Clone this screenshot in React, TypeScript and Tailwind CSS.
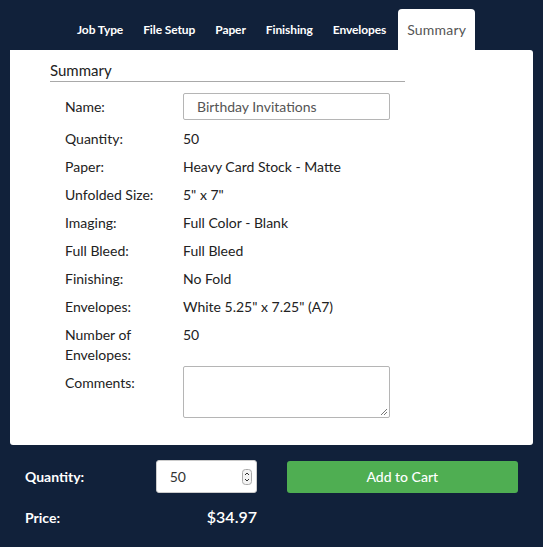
import React from 'react';

const tabs = ['Job Type', 'File Setup', 'Paper', 'Finishing', 'Envelopes', 'Summary'];

const rows: [string, string][] = [
  ['Quantity:', '50'],
  ['Paper:', 'Heavy Card Stock - Matte'],
  ['Unfolded Size:', '5" x 7"'],
  ['Imaging:', 'Full Color - Blank'],
  ['Full Bleed:', 'Full Bleed'],
  ['Finishing:', 'No Fold'],
  ['Envelopes:', 'White 5.25" x 7.25" (A7)'],
];

export default function App() {
  return (
    <div className="w-full h-[547px] bg-[#11213a] font-['Lato','Liberation_Sans',sans-serif] overflow-hidden">
      {/* tabs */}
      <div className="flex pt-[9px] pl-[67px]">
        {tabs.map((t) => {
          const active = t === 'Summary';
          return active ? (
            <div key={t} className="ml-[2px] h-[41px] px-[9px] flex items-center bg-white rounded-t-[4px] text-[14px] text-[#555] tracking-[0.2px]">
              {t}
            </div>
          ) : (
            <div key={t} className="h-[41px] px-[10px] flex items-center text-[12px] font-bold text-white tracking-[-0.1px]">
              {t}
            </div>
          );
        })}
      </div>

      {/* panel */}
      <div className="mx-[10px] h-[395px] bg-white rounded-b-[3px] rounded-tr-[3px] pl-[40px] pt-[10px]">
        <div className="w-[355px] border-b border-[#a9a9a9] text-[15px] leading-[21px] text-[#222]">Summary</div>

        <div className="pl-[15px] mt-[11px] text-[14px] text-[#222]">
          <div className="flex items-center h-[27px]">
            <div className="w-[118px]">Name:</div>
            <div className="w-[207px] h-[27px] border border-[#b5b5b5] rounded-[2px] pl-[13px] flex items-center text-[#555]">
              Birthday Invitations
            </div>
          </div>
          {rows.map(([l, v], i) => (
            <div key={l} className={`flex leading-[20px] ${i === 0 ? 'mt-[9px]' : 'mt-[8px]'}`}>
              <div className="w-[118px]">{l}</div>
              <div>{v}</div>
            </div>
          ))}
          <div className="flex mt-[8px] leading-[20px]">
            <div className="w-[118px]">Number of<br />Envelopes:</div>
            <div>50</div>
          </div>
          <div className="flex mt-[1px]">
            <div className="w-[118px] pt-[7px] leading-[20px]">Comments:</div>
            <div className="relative w-[207px] h-[52px] border border-[#b5b5b5] rounded-[2px]">
              <svg className="absolute right-[1px] bottom-[1px]" width="8" height="8" viewBox="0 0 8 8">
                <path d="M7 1L1 7M7 4L4 7" stroke="#777" strokeWidth="1" />
              </svg>
            </div>
          </div>
        </div>
      </div>

      {/* bottom */}
      <div className="px-[25px] pt-[15px] text-white">
        <div className="flex items-center">
          <div className="w-[131px] text-[14px] font-bold">Quantity:</div>
          <div className="w-[101px] h-[33px] bg-white rounded-[3px] border border-[#ccc] flex items-center pl-[13px] pr-[4px] text-[14px] text-[#333]">
            <span className="flex-1">50</span>
            <svg width="10" height="16" viewBox="0 0 10 16">
              <rect x="0.5" y="0.5" width="9" height="15" rx="3" fill="#f4f4f4" stroke="#aaa" />
              <path d="M3 6L5 4L7 6M3 10L5 12L7 10" stroke="#333" strokeWidth="1" fill="none" />
            </svg>
          </div>
          <button className="ml-[30px] w-[232px] h-[32px] bg-[#4fae52] rounded-[3px] text-white text-[14px] font-medium">
            Add to Cart
          </button>
        </div>
        <div className="flex items-center mt-[12px]">
          <div className="w-[131px] text-[14px] font-bold">Price:</div>
          <div className="w-[101px] text-right text-[16px] font-semibold">$34.97</div>
        </div>
      </div>
    </div>
  );
}
